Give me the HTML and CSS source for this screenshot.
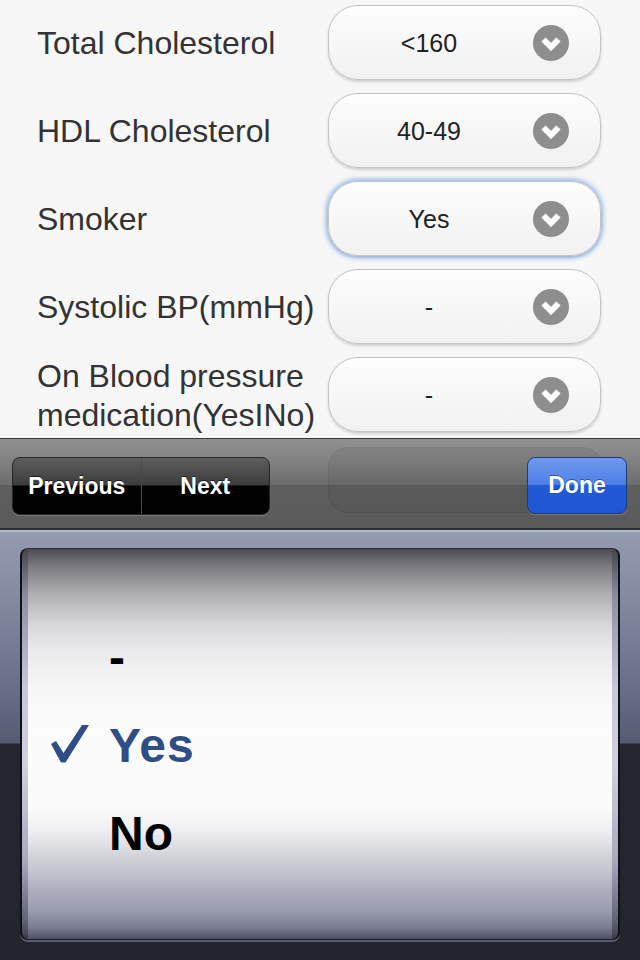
FILE: index.html
```html
<!DOCTYPE html>
<html>
<head>
<meta charset="utf-8">
<link rel="stylesheet" href="styles.css">
</head>
<body>
<div class="screen">
  <div class="form">
    <div class="row">
      <div class="label">Total Cholesterol</div>
      <div class="select"><span class="value">&lt;160</span><svg class="chev" viewBox="0 0 36 36" width="36" height="36"><circle cx="18" cy="18" r="18" fill="#8e8e8e"/><polyline points="10.5,14.5 18,22 25.5,14.5" fill="none" stroke="#fff" stroke-width="6" stroke-linejoin="miter" stroke-linecap="butt"/></svg></div>
    </div>
    <div class="row">
      <div class="label">HDL Cholesterol</div>
      <div class="select"><span class="value">40-49</span><svg class="chev" viewBox="0 0 36 36" width="36" height="36"><circle cx="18" cy="18" r="18" fill="#8e8e8e"/><polyline points="10.5,14.5 18,22 25.5,14.5" fill="none" stroke="#fff" stroke-width="6" stroke-linejoin="miter" stroke-linecap="butt"/></svg></div>
    </div>
    <div class="row">
      <div class="label">Smoker</div>
      <div class="select focused"><span class="value">Yes</span><svg class="chev" viewBox="0 0 36 36" width="36" height="36"><circle cx="18" cy="18" r="18" fill="#8e8e8e"/><polyline points="10.5,14.5 18,22 25.5,14.5" fill="none" stroke="#fff" stroke-width="6" stroke-linejoin="miter" stroke-linecap="butt"/></svg></div>
    </div>
    <div class="row">
      <div class="label">Systolic BP(mmHg)</div>
      <div class="select"><span class="value">-</span><svg class="chev" viewBox="0 0 36 36" width="36" height="36"><circle cx="18" cy="18" r="18" fill="#8e8e8e"/><polyline points="10.5,14.5 18,22 25.5,14.5" fill="none" stroke="#fff" stroke-width="6" stroke-linejoin="miter" stroke-linecap="butt"/></svg></div>
    </div>
    <div class="row">
      <div class="label two">On Blood pressure medication(YesINo)</div>
      <div class="select"><span class="value">-</span><svg class="chev" viewBox="0 0 36 36" width="36" height="36"><circle cx="18" cy="18" r="18" fill="#8e8e8e"/><polyline points="10.5,14.5 18,22 25.5,14.5" fill="none" stroke="#fff" stroke-width="6" stroke-linejoin="miter" stroke-linecap="butt"/></svg></div>
    </div>
  </div>

  <div class="toolbar">
    <div class="ghost"></div>
    <div class="segmented">
      <div class="seg">Previous</div>
      <div class="seg">Next</div>
    </div>
    <div class="done">Done</div>
  </div>

  <div class="picker">
    <div class="wheel">
      <div class="wheel-inner">
        <div class="item"><span class="mark"></span><span class="text">-</span></div>
        <div class="item selected"><span class="mark"><svg viewBox="0 0 38 38" width="38" height="38"><polygon points="0,19 5,16 12.5,28 31,0 38,0 14.5,37.5 10,37.5" fill="#2f4d86"/></svg></span><span class="text">Yes</span></div>
        <div class="item"><span class="mark"></span><span class="text">No</span></div>
      </div>
    </div>
  </div>
</div>
</body>
</html>
```

FILE: styles.css
```css
html, body {
  margin: 0;
  padding: 0;
}
body {
  font-family: "Liberation Sans", Arial, sans-serif;
  background: #22242e;
}
.screen {
  width: 640px;
  height: 960px;
  overflow: hidden;
  display: flex;
  flex-direction: column;
}

/* form */
.form {
  height: 438px;
  flex: none;
  background: #f7f7f7;
  padding-top: 5px;
  box-sizing: border-box;
  overflow: hidden;
}
.row {
  display: flex;
  align-items: center;
  height: 75px;
  margin-bottom: 13px;
}
.label {
  width: 291px;
  padding-left: 37px;
  flex: none;
  font-size: 32px;
  color: #333;
  line-height: 39px;
  margin-top: 2px;
}
.select {
  flex: none;
  width: 273px;
  height: 75px;
  box-sizing: border-box;
  border: 1.5px solid #c3c3c3;
  border-radius: 30px;
  background: linear-gradient(#fefefe, #f8f8f8 45%, #f1f1f1);
  box-shadow: 0 2px 3px rgba(0,0,0,0.16);
  display: flex;
  align-items: center;
  padding-right: 31px;
}
.select.focused {
  box-shadow: 0 0 5px 2px rgba(110,160,225,0.75), 0 2px 3px rgba(0,0,0,0.1);
}
.value {
  flex: 1;
  text-align: center;
  font-size: 25px;
  color: #222;
  margin-right: 4px;
  margin-top: 2px;
}
.chev {
  flex: none;
  display: block;
}

/* toolbar */
.toolbar {
  position: relative;
  height: 92px;
  flex: none;
  box-sizing: border-box;
  border-top: 1px solid #3a3a3a;
  border-bottom: 2px solid #2c2e36;
  background: linear-gradient(#919191 0, #7e7e7e 30%, #6c6c6c 52%, #5f5f5f 52%, #5a5a5a 100%);
  display: flex;
  align-items: flex-start;
  padding: 18px 13px 0 12px;
}
.ghost {
  position: absolute;
  left: 328px;
  top: 8px;
  width: 274px;
  height: 66px;
  border-radius: 20px;
  background: rgba(0,0,0,0.05);
  box-shadow: inset 0 0 0 1px rgba(0,0,0,0.05);
}
.segmented {
  position: relative;
  display: flex;
  width: 258px;
  height: 58px;
  box-sizing: border-box;
  border: 1px solid #262626;
  border-radius: 8px;
  overflow: hidden;
  background: linear-gradient(#5d5d5d 0, #3c3c3c 48%, #030303 50%, #000 100%);
  box-shadow: 0 1px 0 rgba(255,255,255,0.18);
}
.seg {
  flex: 1;
  display: flex;
  align-items: center;
  justify-content: center;
  color: #fff;
  font-weight: bold;
  font-size: 23px;
  text-shadow: 0 -1px 0 rgba(0,0,0,0.6);
}
.seg + .seg {
  border-left: 1px solid #4a4a4a;
}
.done {
  position: relative;
  margin-left: auto;
  width: 100px;
  height: 57px;
  box-sizing: border-box;
  border: 1px solid #1e3a78;
  border-radius: 8px;
  background: linear-gradient(#7099ee 0, #4d80e6 48%, #2159d7 50%, #1e56d5 100%);
  box-shadow: 0 1px 0 rgba(255,255,255,0.18);
  color: #fff;
  font-weight: bold;
  font-size: 23px;
  display: flex;
  align-items: center;
  justify-content: center;
  text-shadow: 0 -1px 0 rgba(0,0,0,0.4);
}

/* picker */
.picker {
  flex: 1;
  border-top: 2px solid #b6bac8;
  background:
    linear-gradient(#959cb0 0, #858ca2 60px, #6a7088 150px, #565b72 211px, #23252f 212px, #22242e 100%);
  padding: 16px 20px 0 20px;
}
.wheel {
  height: 392px;
  box-sizing: border-box;
  border-left: 2px solid #101016;
  border-right: 2px solid #101016;
  border-top: 1px solid #2a2a30;
  border-bottom: 1px solid #1a1a22;
  border-radius: 8px;
  padding: 0 6px;
  background: linear-gradient(#45454e 0, #8c8ea0 12%, #c6c8da 35%, #cfd1e1 55%, #a6a8bd 80%, #5c5e72 96%, #3a3b48 100%);
  box-shadow: 0 2px 0 #5a5c70;
}
.wheel-inner {
  height: 100%;
  box-sizing: border-box;
  padding-top: 64px;
  background: linear-gradient(#4a4a50 0, #77777d 4%, #acacb0 11%, #d6d6da 19%, #eaeaec 26%, #f6f6f7 35%, #fcfcfc 45%, #fbfbfb 66%, #f0f0f2 72%, #d2d3d9 79%, #b1b2c0 87%, #979aab 93%, #7b7d92 97%, #4e5064 100%);
}
.item {
  height: 88px;
  display: flex;
  align-items: center;
  font-weight: bold;
  font-size: 48px;
  color: #000;
}
.mark {
  width: 81px;
  flex: none;
  display: flex;
  align-items: center;
  padding-left: 23px;
  box-sizing: border-box;
}
.mark svg {
  display: block;
  margin-top: -2px;
}
.item.selected {
  color: #2f4d86;
}
.item.selected .text {
  letter-spacing: 1px;
}
```
